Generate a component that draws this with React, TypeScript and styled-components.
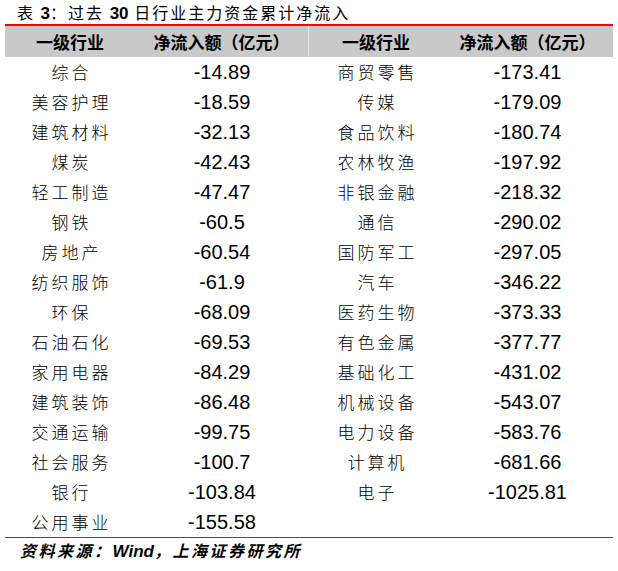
import styled, { createGlobalStyle } from 'styled-components';

type TFlowRow = { name: string; value: string };

const leftRows: TFlowRow[] = [
  { name: '综合', value: '-14.89' },
  { name: '美容护理', value: '-18.59' },
  { name: '建筑材料', value: '-32.13' },
  { name: '煤炭', value: '-42.43' },
  { name: '轻工制造', value: '-47.47' },
  { name: '钢铁', value: '-60.5' },
  { name: '房地产', value: '-60.54' },
  { name: '纺织服饰', value: '-61.9' },
  { name: '环保', value: '-68.09' },
  { name: '石油石化', value: '-69.53' },
  { name: '家用电器', value: '-84.29' },
  { name: '建筑装饰', value: '-86.48' },
  { name: '交通运输', value: '-99.75' },
  { name: '社会服务', value: '-100.7' },
  { name: '银行', value: '-103.84' },
  { name: '公用事业', value: '-155.58' },
];

const rightRows: TFlowRow[] = [
  { name: '商贸零售', value: '-173.41' },
  { name: '传媒', value: '-179.09' },
  { name: '食品饮料', value: '-180.74' },
  { name: '农林牧渔', value: '-197.92' },
  { name: '非银金融', value: '-218.32' },
  { name: '通信', value: '-290.02' },
  { name: '国防军工', value: '-297.05' },
  { name: '汽车', value: '-346.22' },
  { name: '医药生物', value: '-373.33' },
  { name: '有色金属', value: '-377.77' },
  { name: '基础化工', value: '-431.02' },
  { name: '机械设备', value: '-543.07' },
  { name: '电力设备', value: '-583.76' },
  { name: '计算机', value: '-681.66' },
  { name: '电子', value: '-1025.81' },
];

const App = () => {
  return (
    <>
      <GlobalStyle />
      <S.Page>
        <S.Title>
          表 <S.TitleNum>3</S.TitleNum>：过去 <S.TitleNum>30</S.TitleNum> 日行业主力资金累计净流入
        </S.Title>
        <S.Table>
          <S.HeaderRow>
            <S.HeaderCell>一级行业</S.HeaderCell>
            <S.HeaderCell $divider>净流入额（亿元）</S.HeaderCell>
            <S.HeaderCell>一级行业</S.HeaderCell>
            <S.HeaderCell>净流入额（亿元）</S.HeaderCell>
          </S.HeaderRow>
          {leftRows.map((left, i) => {
            const right = rightRows[i];
            return (
              <S.Row key={left.name}>
                <S.NameCell>{left.name}</S.NameCell>
                <S.ValueCell>{left.value}</S.ValueCell>
                <S.NameCell>{right?.name}</S.NameCell>
                <S.ValueCell>{right?.value}</S.ValueCell>
              </S.Row>
            );
          })}
        </S.Table>
        <S.Source>
          资料来源：<S.SourceLatin>Wind</S.SourceLatin>，上海证券研究所
        </S.Source>
      </S.Page>
    </>
  );
};

export default App;

const GlobalStyle = createGlobalStyle`
  body {
    margin: 0;
    background: #fff;
  }
`;

const COLUMNS = '130px 174px 134px 169px';
const CJK = `'Noto Sans CJK SC', 'Noto Sans', sans-serif`;
const LATIN = `'Liberation Sans', Arial, 'Noto Sans CJK SC', sans-serif`;

const S = {
  Page: styled.div`
    width: 618px;
    padding: 0 5px;
    box-sizing: border-box;
    color: #000;
  `,
  Title: styled.div`
    height: 24px;
    padding-left: 12px;
    font-family: ${CJK};
    font-size: 16px;
    font-weight: 400;
    line-height: 24px;
    letter-spacing: 2px;
    white-space: nowrap;
  `,
  TitleNum: styled.span`
    font-family: ${LATIN};
    font-weight: 700;
    font-size: 17px;
    letter-spacing: 0;
  `,
  Table: styled.div`
    border-top: 2px solid #f00;
    border-bottom: 1px solid #f00;
  `,
  HeaderRow: styled.div`
    display: grid;
    grid-template-columns: ${COLUMNS};
    height: 31px;
    background: #c9c9c9;
  `,
  Row: styled.div`
    display: grid;
    grid-template-columns: ${COLUMNS};
    height: 30px;
    align-items: center;
  `,

  // Typography
  HeaderCell: styled.div<{ $divider?: boolean }>`
    display: flex;
    align-items: center;
    justify-content: center;
    font-family: ${CJK};
    font-size: 17px;
    font-weight: 700;
    border-right: ${({ $divider }) => ($divider ? '1px solid #e2e2e2' : 'none')};
  `,
  NameCell: styled.div`
    text-align: center;
    padding-left: 3px;
    font-family: ${CJK};
    font-size: 17px;
    font-weight: 300;
    letter-spacing: 3px;
    line-height: 30px;
  `,
  ValueCell: styled.div`
    text-align: center;
    font-family: ${LATIN};
    font-size: 20px;
    line-height: 30px;
  `,
  Source: styled.div`
    padding-left: 15px;
    font-family: ${CJK};
    font-size: 16px;
    font-weight: 700;
    font-style: italic;
    letter-spacing: 2.5px;
    line-height: 24px;
  `,
  SourceLatin: styled.span`
    font-family: ${LATIN};
    font-size: 17px;
    letter-spacing: 0;
  `,
};
